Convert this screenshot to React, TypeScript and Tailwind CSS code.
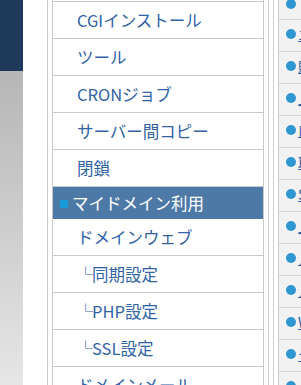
import React from "react";

const menu: { label: string; kind: "item" | "sub" | "active" }[] = [
  { label: "CGIインストール", kind: "item" },
  { label: "ツール", kind: "item" },
  { label: "CRONジョブ", kind: "item" },
  { label: "サーバー間コピー", kind: "item" },
  { label: "閉鎖", kind: "item" },
  { label: "マイドメイン利用", kind: "active" },
  { label: "ドメインウェブ", kind: "item" },
  { label: "同期設定", kind: "sub" },
  { label: "PHP設定", kind: "sub" },
  { label: "SSL設定", kind: "sub" },
  { label: "ドメインメール", kind: "item" },
];

const side = [
  "エラーログ",
  "販売管理",
  "上位プラン",
  "口座登録",
  "取引履歴",
  "SSL証明書",
  "上位設定",
  "メール転送",
  "メール設定",
  "WordPress",
  "テンプレート",
  "その他",
];

export default function App() {
  return (
    <div
      className="flex w-[301px] h-[385px] overflow-hidden bg-white"
      style={{ fontFamily: '"Noto Sans CJK JP", "Noto Sans", sans-serif' }}
    >
      <div className="flex flex-col w-[23px] shrink-0">
        <div className="h-[71px] bg-[#1f395a]" />
        <div className="flex-1 bg-gradient-to-b from-[#b6b6b6] to-[#e6e6e6]" />
      </div>
      <div className="w-[24px] shrink-0" />
      <div className="w-[1px] shrink-0 bg-[#c9c9c9]" />
      <div className="w-[4px] shrink-0" />
      <div className="w-[212px] shrink-0 border-x border-[#c9c9c9] flex flex-col">
        <div className="h-[2px] shrink-0 border-b border-[#c9c9c9]" />
        {menu.map((m) =>
          m.kind === "active" ? (
            <div
              key={m.label}
              className="h-[32px] shrink-0 bg-[#4d79a7] flex items-center pl-[7px] text-white text-[16.5px] leading-none whitespace-nowrap"
            >
              <span className="w-[8px] h-[8px] bg-[#159cd8] mr-[4px] mt-[1px]" />
              {m.label}
            </div>
          ) : m.kind === "sub" ? (
            <div
              key={m.label}
              className="h-[37px] shrink-0 border-b border-[#c9c9c9] flex items-center pl-[25px] text-[#2f62a6] text-[16.5px] leading-none whitespace-nowrap"
            >
              <span className="inline-block text-[15px] leading-none relative top-[-1px] mr-[-1px]">└</span>
              <span>{m.label}</span>
            </div>
          ) : (
            <div
              key={m.label}
              className="h-[37px] shrink-0 border-b border-[#c9c9c9] flex items-center pl-[24px] text-[#2f62a6] text-[16.5px] leading-none whitespace-nowrap"
            >
              {m.label}
            </div>
          )
        )}
      </div>
      <div className="w-[4px] shrink-0" />
      <div className="w-[1px] shrink-0 bg-[#cdcdcd]" />
      <div className="w-[4px] shrink-0" />
      <div className="w-[1px] shrink-0 bg-[#cdcdcd]" />
      <div className="w-[4px] shrink-0" />
      <div className="flex-1 min-w-0 border-l border-[#cdcdcd] bg-[#f2f2f2] flex flex-col overflow-hidden">
        <div className="h-[20px] shrink-0 border-b border-[#d6d6d6] flex items-end pl-[7px] pb-[10px]">
          <span className="w-[10px] h-[10px] rounded-full bg-[#2e97d2] shrink-0" />
        </div>
        {side.map((s) => (
          <div
            key={s}
            className="h-[32px] shrink-0 border-b border-[#d6d6d6] flex items-center pl-[7px] pb-[4px] whitespace-nowrap"
          >
            <span className="w-[10px] h-[10px] rounded-full bg-[#2e97d2] shrink-0 mr-[2px]" />
            <span className="text-[#2f62a6] text-[14px] leading-none underline">{s}</span>
          </div>
        ))}
      </div>
    </div>
  );
}
